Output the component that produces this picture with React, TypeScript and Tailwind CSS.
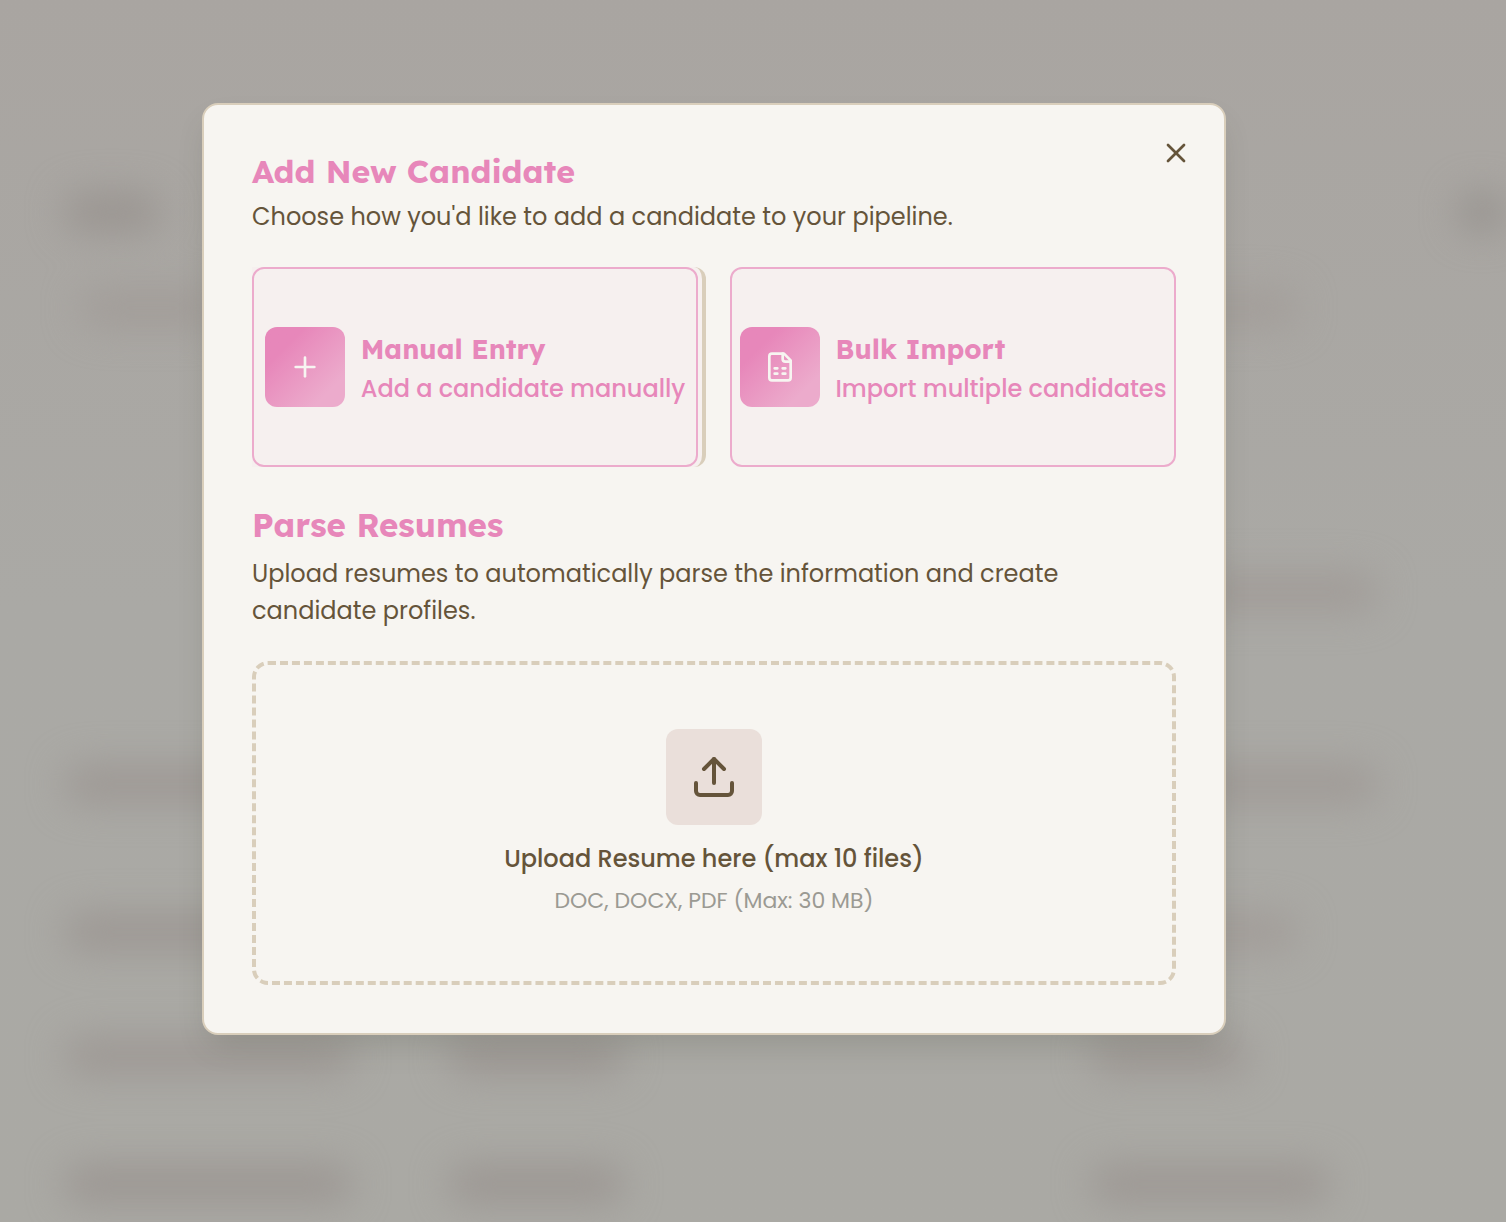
import { useState } from "react";
import type { ReactNode } from "react";
import { Plus, Upload, X } from "lucide-react";

// widths of the blurred table cells behind the dialog
const backdropRows = [
  { key: "title", cells: ["ml-16 w-24 bg-[#9a9591]", "ml-auto w-12 bg-[#97938f]"], className: "mt-48" },
  { key: "filters", cells: ["ml-20 w-36 bg-[#a29d99]", "ml-auto mr-52 w-96 bg-[#a39e9a]"], className: "mt-14" },
  { key: "stats", cells: ["ml-auto mr-32 w-48 bg-[#a19c98]"], className: "mt-61" },
  { key: "head", cells: ["ml-16 w-72 bg-[#9e9995]", "ml-auto mr-32 w-48 bg-[#a09b97]"], className: "mt-38" },
  { key: "row-1", cells: ["ml-16 w-72 bg-[#9d9894]", "ml-auto mr-52 w-36 bg-[#a29d99]"], className: "mt-27" },
  { key: "row-2", cells: ["ml-16 w-72 bg-[#9e9995]", "ml-24 w-44 bg-[#9d9894]", "ml-auto mr-64 w-40 bg-[#9e9995]"], className: "mt-21" },
  { key: "row-3", cells: ["ml-16 w-72 bg-[#9c9793]", "ml-24 w-44 bg-[#9c9793]", "ml-auto mr-44 w-60 bg-[#9d9894]"], className: "mt-22" },
];

function Backdrop() {
  return (
    <div
      aria-hidden="true"
      className="absolute inset-0 overflow-hidden bg-linear-to-b from-[#a9a5a1] via-[#aaa9a5] to-[#aaa9a4]"
    >
      <div className="blur-[18px]">
        {backdropRows.map((row) => (
          <div key={row.key} className={`flex ${row.className}`}>
            {row.cells.map((cell) => (
              <div key={cell} className={`h-10 rounded-full ${cell}`} />
            ))}
          </div>
        ))}
      </div>
    </div>
  );
}

function FileSheetIcon() {
  return (
    <svg
      className="size-8"
      viewBox="0 0 24 24"
      fill="none"
      stroke="currentColor"
      strokeWidth={2}
      strokeLinecap="round"
      strokeLinejoin="round"
    >
      <path d="M15 2H6a2 2 0 0 0-2 2v16a2 2 0 0 0 2 2h12a2 2 0 0 0 2-2V7Z" />
      <path d="M14 2v4a2 2 0 0 0 2 2h4" />
      <path d="M8 13h2M14 13h2M8 17h2M14 17h2" />
    </svg>
  );
}

function OptionButton({
  icon,
  title,
  text,
}: {
  icon: ReactNode;
  title: string;
  text: string;
}) {
  return (
    <button
      type="button"
      className="flex h-50 w-full items-center justify-center gap-4 rounded-xl border-2 border-[#ecabcc] bg-[#f6f0ef] text-left text-[#e787ba]"
    >
      <span className="flex size-20 shrink-0 items-center justify-center rounded-xl bg-linear-to-br from-[#e787ba] from-25% to-[#ecabcc] to-80% text-[#f7f5f1]">
        {icon}
      </span>
      <span className="whitespace-nowrap">
        <span className="block font-['Lexend','Poppins',sans-serif] text-[27px] leading-11 font-bold">
          {title}
        </span>
        <span className="block text-2xl leading-9 font-medium">{text}</span>
      </span>
    </button>
  );
}

export default function App() {
  const [open, setOpen] = useState(true);

  return (
    <div className="relative min-h-screen overflow-hidden font-['Poppins','Inter',sans-serif] text-[#65543a]">
      <Backdrop />

      {open && (
        <div className="relative flex justify-center pt-[103px] pr-[78px] pb-16">
          <div
            role="dialog"
            aria-labelledby="dialog-title"
            className="relative w-full max-w-5xl rounded-2xl border-2 border-[#d9cebb] bg-[#f7f5f1] p-12 shadow-[0_16px_32px_-8px_rgba(60,65,50,0.2)]"
          >
            <button
              type="button"
              aria-label="Close"
              onClick={() => setOpen(false)}
              className="absolute top-8 right-8"
            >
              <X className="size-8" strokeWidth={2} />
            </button>

            <h2
              id="dialog-title"
              className="font-['Lexend','Poppins',sans-serif] text-[32px] leading-9 font-bold text-[#e787ba]"
            >
              Add New Candidate
            </h2>
            <p className="mt-2.5 text-2xl leading-9">
              Choose how you'd like to add a candidate to your pipeline.
            </p>

            <div className="mt-8 flex gap-6">
              <div className="flex-1 rounded-r-xl border-r-4 border-[#d9cebb] bg-[#f6f0ef] pr-1">
                <OptionButton
                  icon={<Plus className="size-8" strokeWidth={2} />}
                  title="Manual Entry"
                  text="Add a candidate manually"
                />
              </div>
              <div className="flex-1">
                <OptionButton
                  icon={<FileSheetIcon />}
                  title="Bulk Import"
                  text="Import multiple candidates"
                />
              </div>
            </div>

            <h3 className="mt-10 font-['Lexend','Poppins',sans-serif] text-[33px] leading-9 font-bold text-[#e787ba]">
              Parse Resumes
            </h3>
            <p className="mt-3 text-2xl leading-[37px]">
              Upload resumes to automatically parse the information and create
              candidate profiles.
            </p>

            <label className="mt-8 flex cursor-pointer flex-col items-center rounded-2xl border-4 border-dashed border-[#d9cebb] p-16">
              <span className="flex size-24 items-center justify-center rounded-xl bg-[#eadfda]">
                <Upload className="size-12" strokeWidth={2} />
              </span>
              <span className="mt-4 text-2xl leading-9 font-medium">
                Upload Resume here (max 10 files)
              </span>
              <span className="mt-2 text-[22px] leading-8 text-[#9b9a93]">
                DOC, DOCX, PDF (Max: 30 MB)
              </span>
              <input type="file" multiple accept=".doc,.docx,.pdf" className="sr-only" />
            </label>
          </div>
        </div>
      )}
    </div>
  );
}
